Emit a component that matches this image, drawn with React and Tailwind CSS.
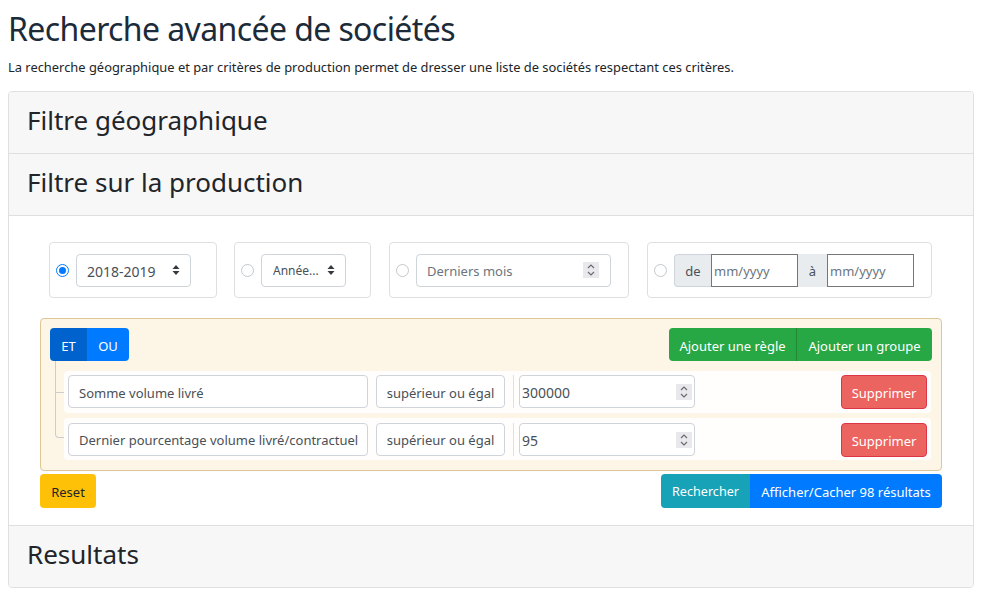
const Caret = () => (
  <svg width="8" height="12" viewBox="0 0 8 12" className="shrink-0">
    <path d="M4 1 7.5 5H.5zM4 11 .5 7h7z" fill="#343a40" />
  </svg>
)

const Spinner = () => (
  <svg width="16" height="16" viewBox="0 0 16 16" className="shrink-0 bg-[#e9e9ed]">
    <path d="M5 6 8 3l3 3M5 10l3 3 3-3" fill="none" stroke="#6b6b70" strokeWidth="1.2" />
  </svg>
)

const Radio = ({ checked }) => (
  <span
    className={`block w-[13px] h-[13px] shrink-0 rounded-full border ${
      checked ? 'border-[#007bff] p-[2px]' : 'border-[#c4c8cc]'
    }`}
  >
    {checked && <span className="block w-full h-full rounded-full bg-[#007bff]" />}
  </span>
)

const Select = ({ label, className, textClass }) => (
  <div
    className={`flex items-center justify-between h-[33px] pl-[10px] pr-[10px] bg-white border border-[#ced4da] rounded text-[#495057] ${className}`}
  >
    <span className={`truncate pt-[2px] ${textClass}`}>{label}</span>
    <Caret />
  </div>
)

const Period = ({ className, children }) => (
  <div className={`flex items-center h-[56px] pl-[6px] gap-[7px] border border-[#dfdfdf] rounded ${className}`}>
    {children}
  </div>
)

const Addon = ({ label, className }) => (
  <span className={`flex items-center justify-center h-full pt-[3px] bg-[#e9ecef] text-[#495057] ${className}`}>
    {label}
  </span>
)

const DateInput = () => (
  <input
    placeholder="mm/yyyy"
    className="w-[87px] h-full px-[2px] pt-[2px] bg-white border border-[#767676] text-[#495057] placeholder:text-[#6c757d] outline-none"
  />
)

const Rule = ({ field, value, className, textPad }) => (
  <div className={`flex items-start h-[42px] px-[4px] bg-[#fffefc] rounded ${className}`}>
    <div className={`flex items-center w-[300px] h-[33px] pl-[10px] bg-white border border-[#ced4da] rounded text-[#495057] whitespace-nowrap overflow-hidden ${textPad}`}>
      {field}
    </div>
    <div className={`flex items-center justify-center w-[129px] h-[33px] ml-[8px] bg-white border border-[#ced4da] rounded text-[#495057] whitespace-nowrap ${textPad}`}>
      supérieur ou égal
    </div>
    <div className="w-px h-[33px] ml-[8px] bg-[#dfdfdf]" />
    <div className="flex items-center justify-between w-[176px] h-[33px] ml-[5px] px-[2px] bg-white border border-[#ced4da] rounded text-[14px] text-[#495057]">
      <span className="pt-[2px]">{value}</span>
      <Spinner />
    </div>
    <button
      type="button"
      className="w-[86px] h-[34px] ml-auto pt-[3px] bg-[#ec6460] border border-[#dc3545] rounded text-white"
    >
      Supprimer
    </button>
  </div>
)

const CardHeader = ({ title, last }) => (
  <div
    className={`flex items-center pl-[18px] pb-[4px] bg-[#f7f7f7] text-[#212529] text-[26px] ${
      last ? 'h-[61px]' : 'h-[62px] border-b border-[#dfdfdf]'
    }`}
  >
    {title}
  </div>
)

export default function App() {
  return (
    <div className="px-[8px] pt-[6px] bg-white text-[13px] text-[#212529] font-['Noto_Sans','Open_Sans',sans-serif] min-h-[598px]">
      <h1 className="h-[46px] text-[32px] tracking-[-0.6px] leading-[46px] text-[#1c2b3a] whitespace-nowrap">
        Recherche avancée de sociétés
      </h1>
      <p className="mt-[5px] h-[21px] text-[12.9px] leading-[21px] whitespace-nowrap">
        La recherche géographique et par critères de production permet de dresser une liste de sociétés respectant ces critères.
      </p>
      <div className="mt-[13px] border border-[#dfdfdf] rounded overflow-hidden">
        <CardHeader title="Filtre géographique" />
        <CardHeader title="Filtre sur la production" />
        <div className="h-[310px] pt-[26px] px-[31px] border-b border-[#dfdfdf]">
          <div className="flex gap-[17px] ml-[9px]">
            <Period className="w-[168px]">
              <Radio checked />
              <Select label="2018-2019" className="w-[115px]" textClass="text-[14px]" />
            </Period>
            <Period className="w-[137px]">
              <Radio />
              <Select label="Année..." className="w-[85px] pl-[11px]" textClass="text-[12px]" />
            </Period>
            <Period className="w-[240px] ml-[1px]">
              <Radio />
              <div className="flex items-center justify-between w-[195px] h-[33px] pl-[10px] pr-[11px] bg-white border border-[#ced4da] rounded text-[#6c757d]">
                <span className="pt-[3px]">Derniers mois</span>
                <Spinner />
              </div>
            </Period>
            <Period className="w-[285px] ml-[1px]">
              <Radio />
              <div className="flex items-center h-[33px]">
                <Addon label="de" className="w-[37px] rounded-l border-y border-l border-[#ced4da]" />
                <DateInput />
                <Addon label="à" className="w-[29px]" />
                <DateInput />
              </div>
            </Period>
          </div>

          <div className="mt-[20px] h-[153px] px-[9px] pt-[9px] bg-[#fdf5e6] border border-[#dcc896] rounded">
            <div className="flex justify-between">
              <div className="flex h-[33px] text-white">
                <span className="flex items-center justify-center w-[37px] pt-[5px] bg-[#0062cc] rounded-l">ET</span>
                <span className="flex items-center justify-center w-[42px] pt-[5px] bg-[#007bff] rounded-r">OU</span>
              </div>
              <div className="flex h-[33px] text-white">
                <span className="flex items-center justify-center w-[128px] pt-[5px] bg-[#28a745] border-r border-[#218838] rounded-l">
                  Ajouter une règle
                </span>
                <span className="flex items-center justify-center w-[135px] pt-[5px] bg-[#28a745] rounded-r">
                  Ajouter un groupe
                </span>
              </div>
            </div>
            <div className="relative flex flex-col gap-[5px] mt-[10px] ml-[14px] mr-[1px]">
              <span className="absolute left-[-9px] top-[-10px] w-[9px] h-[32px] border-b border-l border-[#ccc]" />
              <span className="absolute left-[-9px] top-[22px] w-[9px] h-[45px] border-b border-l border-[#ccc] rounded-bl" />
              <Rule field="Somme volume livré" value="300000" className="pt-[4px]" textPad="pt-[5px]" />
              <Rule field="Dernier pourcentage volume livré/contractuel" value="95" className="pt-[5px]" textPad="pt-[3px]" />
            </div>
          </div>

          <div className="flex justify-between mt-[3px]">
            <button
              type="button"
              className="w-[56px] h-[34px] pt-[3px] bg-[#ffc107] rounded text-[#212529]"
            >
              Reset
            </button>
            <div className="flex h-[34px] text-white">
              <span className="flex items-center justify-center w-[89px] pt-[3px] text-[12.6px] bg-[#17a2b8] rounded-l">Rechercher</span>
              <span className="flex items-center justify-center w-[192px] pt-[3px] bg-[#007bff] rounded-r">
                Afficher/Cacher 98 résultats
              </span>
            </div>
          </div>
        </div>
        <CardHeader title="Resultats" last />
      </div>
    </div>
  )
}
